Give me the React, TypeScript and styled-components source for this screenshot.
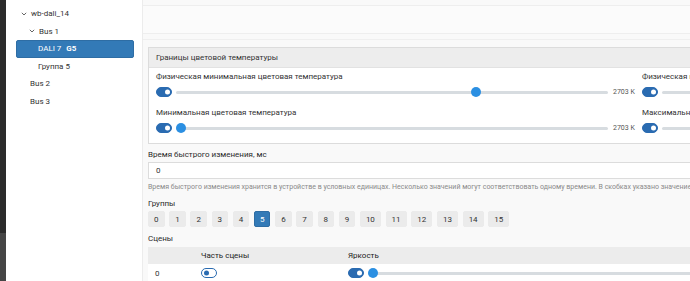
import * as React from 'react';
import styled, { createGlobalStyle } from 'styled-components';

const GlobalStyle = createGlobalStyle`
	html, body {
		margin: 0;
		padding: 0;
		width: 690px;
		height: 281px;
		overflow: hidden;
		font-family: Roboto, 'Noto Sans', sans-serif;
		font-size: 8px;
		color: #333;
	}
`;

const Layout = styled.div`
	display: flex;
	height: 281px;
	width: 690px;
	overflow: hidden;
`;

const DarkStrip = styled.div`
	width: 6px;
	flex: none;
	display: flex;
	flex-direction: column;
	div:first-child {
		height: 233px;
		background: #2b2b2b;
	}
	div:last-child {
		flex: 1;
		background: #454545;
	}
`;

const Sidebar = styled.div`
	width: 136px;
	flex: none;
	background: #fff;
	border-right: 1px solid #ececec;
	padding-top: 5px;
`;

const TreeItem = styled.div<{ $indent: number; $selected?: boolean }>`
	display: flex;
	align-items: center;
	height: 17.5px;
	box-sizing: border-box;
	margin: 0 8px 0 10px;
	padding-left: ${p => p.$indent}px;
	border: 1px solid ${p => (p.$selected ? '#2e6da4' : 'transparent')};
	border-radius: 2px;
	background: ${p => (p.$selected ? '#337ab7' : 'transparent')};
	color: ${p => (p.$selected ? '#fff' : '#333')};
	white-space: nowrap;
	b {
		margin-left: 5px;
		font-weight: 700;
	}
`;

const Chevron = styled.svg`
	width: 6px;
	height: 4px;
	margin-right: 4px;
	flex: none;
`;

const Main = styled.div`
	flex: 1;
	background: #f9f9f9;
	overflow: hidden;
	min-width: 0;
`;

const TopCard = styled.div`
	margin-top: 5px;
	height: 27px;
	width: 800px;
	background: #fbfbfb;
	border-top: 1px solid #eeeeee;
	border-bottom: 1px solid #eeeeee;
`;

const TopStrip = styled.div`
	height: 5px;
	width: 800px;
	background: #f9f9f9;
	border-bottom: 1px solid #efefef;
`;

const Content = styled.div`
	width: 760px;
	padding: 7px 0 0 5px;
`;

const Panel = styled.div`
	border: 1px solid #dcdcdc;
	background: #fff;
`;

const PanelHeader = styled.div`
	height: 19px;
	display: flex;
	align-items: center;
	padding-left: 7px;
	background: #ededed;
	border-bottom: 1px solid #e2e2e2;
`;

const PanelBody = styled.div`
	display: grid;
	grid-template-columns: 479px 479px;
	column-gap: 7px;
	row-gap: 10px;
	padding: 4px 7px 9px;
`;

const Field = styled.div`
	display: flex;
	flex-direction: column;
	gap: 4px;
`;

const FieldLabel = styled.div`
	line-height: 10px;
	height: 10px;
	white-space: nowrap;
`;

const ControlRow = styled.div`
	display: flex;
	align-items: center;
	height: 12px;
	gap: 4px;
`;

const Toggle = styled.span<{ $on?: boolean }>`
	position: relative;
	display: inline-block;
	flex: none;
	width: 16px;
	height: 10px;
	box-sizing: border-box;
	border-radius: 5px;
	border: 1.5px solid #2a6bb1;
	background: ${p => (p.$on ? '#2a6bb1' : '#fff')};
	&::after {
		content: '';
		position: absolute;
		top: 50%;
		transform: translateY(-50%);
		width: 5px;
		height: 5px;
		border-radius: 50%;
		background: ${p => (p.$on ? '#fff' : '#2a6bb1')};
		${p => (p.$on ? 'right: 1px;' : 'left: 1.5px;')}
	}
`;

const Track = styled.div`
	position: relative;
	flex: 1;
	height: 3px;
	border-radius: 2px;
	background: #d7dce0;
`;

const Thumb = styled.span`
	position: absolute;
	top: 50%;
	transform: translateY(-50%);
	width: 10px;
	height: 10px;
	border-radius: 50%;
	background: #2b8fe2;
`;

const Value = styled.span`
	flex: none;
	width: 22px;
	margin-left: 1px;
	font-size: 7px;
	color: #555;
	white-space: nowrap;
`;

const Label = styled.div<{ $gap: number }>`
	margin-top: ${p => p.$gap}px;
	line-height: 10px;
	height: 10px;
	color: #2a2a2a;
	white-space: nowrap;
`;

const Input = styled.div`
	margin-top: 2px;
	height: 17px;
	box-sizing: border-box;
	display: flex;
	align-items: center;
	padding-left: 7px;
	background: #fff;
	border: 1px solid #dcdcdc;
`;

const Help = styled.div`
	margin-top: 3px;
	line-height: 10px;
	font-size: 7px;
	color: #8a8a8a;
	white-space: nowrap;
`;

const ButtonGroup = styled.div`
	margin-top: 2px;
	display: flex;
	gap: 4.7px;
`;

const GroupButton = styled.div<{ $active?: boolean }>`
	height: 16px;
	min-width: 16px;
	box-sizing: border-box;
	padding: 0 5px;
	display: flex;
	align-items: center;
	justify-content: center;
	border-radius: 2px;
	border: 1px solid ${p => (p.$active ? '#2e6da4' : '#ebebeb')};
	background: ${p => (p.$active ? '#337ab7' : '#ebebeb')};
	color: ${p => (p.$active ? '#fff' : '#333')};
`;

const Table = styled.div`
	margin-top: 3px;
	background: #fff;
`;

const TableRow = styled.div<{ $head?: boolean }>`
	display: grid;
	grid-template-columns: 46px 147px 1fr;
	align-items: center;
	height: ${p => (p.$head ? 17 : 18)}px;
	background: ${p => (p.$head ? '#ececec' : '#fff')};
	color: ${p => (p.$head ? '#222' : '#333')};
	> * {
		padding-left: 7px;
	}
`;

const Cell = styled.div`
	display: flex;
	align-items: center;
	gap: 4px;
`;

const ChevronIcon = () => (
	<Chevron viewBox="0 0 6 4">
		<path d="M0.8 0.8 L3 3 L5.2 0.8" fill="none" stroke="#555" strokeWidth="0.9" />
	</Chevron>
);

const Slider = ({ value }: { value: number }) => (
	<Track>
		<Thumb style={{ left: `calc(${value} * (100% - 10px))` }} />
	</Track>
);

const temperatureFields = [
	{ label: 'Физическая минимальная цветовая температура', value: 0.7 },
	{ label: 'Физическая максимальная цветовая температура', value: 0.3 },
	{ label: 'Минимальная цветовая температура', value: 0 },
	{ label: 'Максимальная цветовая температура', value: 0.3 },
];

const groups = Array.from({ length: 16 }, (_, i) => i);

export default function App() {
	return (
		<>
			<GlobalStyle />
			<Layout>
				<DarkStrip>
					<div />
					<div />
				</DarkStrip>
				<Sidebar>
					<TreeItem $indent={4}>
						<ChevronIcon />
						wb-dali_14
					</TreeItem>
					<TreeItem $indent={12}>
						<ChevronIcon />
						Bus 1
					</TreeItem>
					<TreeItem $indent={21} $selected>
						DALI 7<b>G5</b>
					</TreeItem>
					<TreeItem $indent={21}>Группа 5</TreeItem>
					<TreeItem $indent={13}>Bus 2</TreeItem>
					<TreeItem $indent={13}>Bus 3</TreeItem>
				</Sidebar>
				<Main>
					<TopCard />
					<TopStrip />
					<Content>
						<Panel>
							<PanelHeader>Границы цветовой температуры</PanelHeader>
							<PanelBody>
								{temperatureFields.map(f => (
									<Field key={f.label}>
										<FieldLabel>{f.label}</FieldLabel>
										<ControlRow>
											<Toggle $on />
											<Slider value={f.value} />
											<Value>2703 K</Value>
										</ControlRow>
									</Field>
								))}
							</PanelBody>
						</Panel>
						<Label $gap={6}>Время быстрого изменения, мс</Label>
						<Input>0</Input>
						<Help>
							Время быстрого изменения хранится в устройстве в условных единицах. Несколько значений могут
							соответствовать одному времени. В скобках указано значение в условных единицах.
						</Help>
						<Label $gap={7}>Группы</Label>
						<ButtonGroup>
							{groups.map(g => (
								<GroupButton key={g} $active={g === 5}>
									{g}
								</GroupButton>
							))}
						</ButtonGroup>
						<Label $gap={7}>Сцены</Label>
						<Table>
							<TableRow $head>
								<div />
								<div>Часть сцены</div>
								<div>Яркость</div>
							</TableRow>
							<TableRow>
								<div>0</div>
								<Cell>
									<Toggle />
								</Cell>
								<Cell>
									<Toggle $on />
									<Slider value={0} />
								</Cell>
							</TableRow>
						</Table>
					</Content>
				</Main>
			</Layout>
		</>
	);
}
